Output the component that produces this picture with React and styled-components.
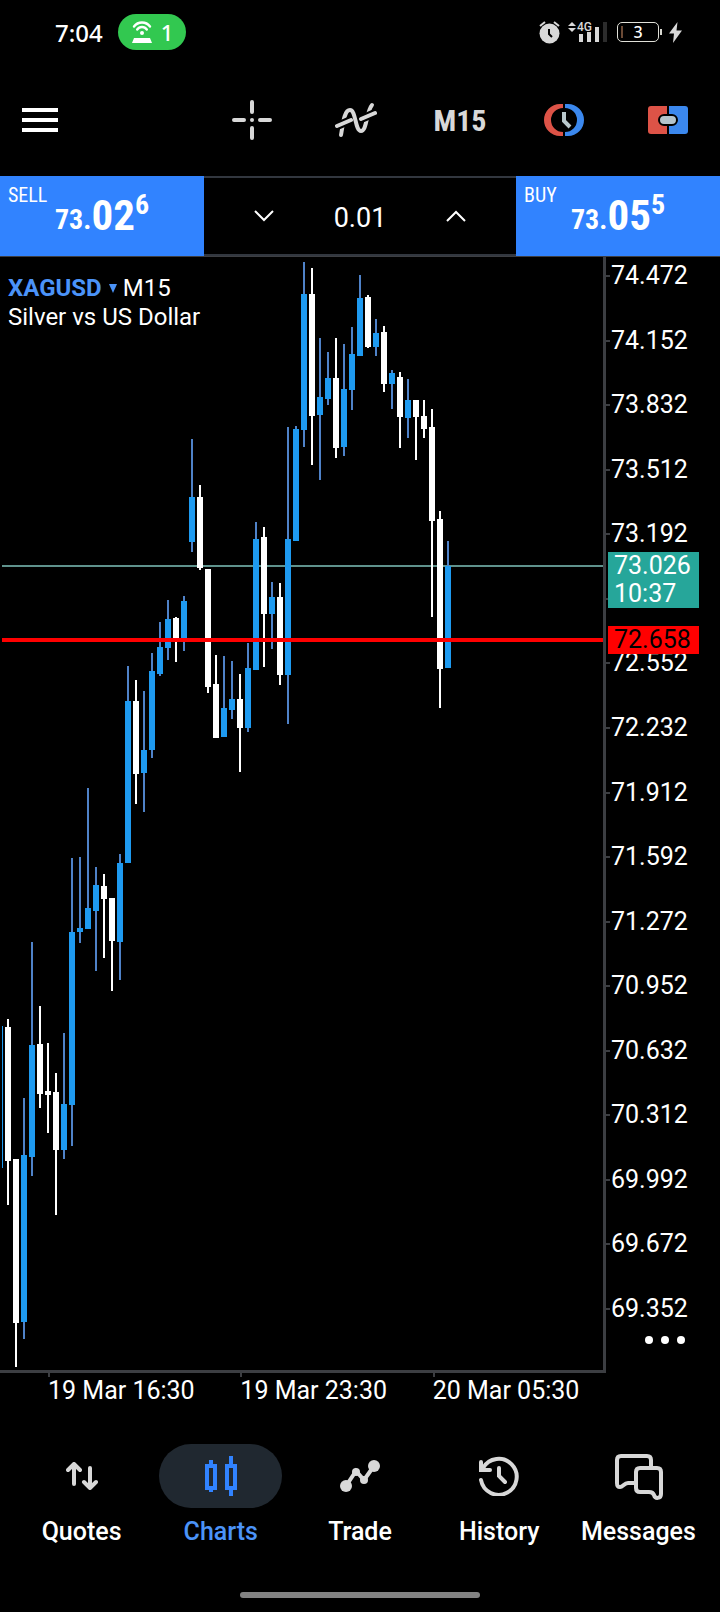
import React, { useState } from 'react';
import styled, { createGlobalStyle } from 'styled-components';

const GlobalStyle = createGlobalStyle`
  * {
    box-sizing: border-box;
  }

  body {
    margin: 0;
    background: #000;
    color: #fff;
    font-family: Roboto, "Noto Sans", sans-serif;
  }

  button, input {
    margin: 0;
    padding: 0;
    border: none;
    background: none;
    color: inherit;
    font-family: inherit;
  }

  button {
    cursor: pointer;
  }

  svg {
    display: block;
  }
`;

const Page = styled.div`
  display: flex;
  flex-direction: column;
  height: 100vh;
  min-height: 900px;
`;

/* ---------- status bar ---------- */

const StatusBar = styled.header`
  display: flex;
  align-items: center;
  height: 64px;
  padding: 0 38px 0 55px;
  font-family: "Noto Sans", sans-serif;
`;

const Clock = styled.time`
  font-size: 24px;
  font-weight: 500;
`;

const Hotspot = styled.div`
  display: flex;
  align-items: center;
  gap: 9px;
  width: 68px;
  height: 36px;
  margin-left: 15px;
  padding-left: 14px;
  border-radius: 18px;
  background: #32c850;
  font-size: 22px;
  font-weight: 500;
`;

const StatusIcons = styled.div`
  display: flex;
  align-items: center;
  gap: 7px;
  margin-left: auto;
`;

const Battery = styled.div`
  display: flex;
  align-items: center;
  gap: 1px;

  &::after {
    content: "";
    width: 2px;
    height: 6px;
    background: #d8d8d0;
  }
`;

const BatteryLevel = styled.span`
  display: flex;
  align-items: center;
  justify-content: center;
  width: 42px;
  height: 20px;
  border: 1px solid #e0e0d8;
  border-radius: 5px;
  background: linear-gradient(#6b4a35, #6b4a35) 3px center / 2px 12px no-repeat;
  font-size: 16px;
  font-weight: 500;
  line-height: 18px;
`;

/* ---------- toolbar ---------- */

const Toolbar = styled.nav`
  display: flex;
  align-items: center;
  height: 112px;
`;

const MenuButton = styled.button`
  padding: 14px 22px;
`;

const Tools = styled.div`
  display: flex;
  flex: 1;
  justify-content: flex-end;
`;

const ToolButton = styled.button`
  display: flex;
  align-items: center;
  justify-content: center;
  width: 104px;
  height: 56px;
  color: #d8d8d8;
  font-family: "Liberation Sans Narrow", "Roboto Condensed", Roboto, sans-serif;
  font-size: 30px;
  font-weight: 700;
`;

/* ---------- one click trading ---------- */

const TradePanel = styled.section`
  display: grid;
  grid-template-columns: 17fr 26fr 17fr;
  height: 80px;
`;

const DealButton = styled.button`
  display: grid;
  grid-template-columns: 1fr;
  justify-items: center;
  align-content: start;
  background: #3183ff;
  color: #fff;
  font-family: "Liberation Sans Narrow", "Roboto Condensed", Roboto, sans-serif;
`;

const DealSide = styled.span`
  grid-area: 1 / 1;
  justify-self: start;
  padding: 8px;
  font-size: 20px;
  line-height: 22px;
`;

const DealPrice = styled.span`
  grid-area: 1 / 1;
  display: flex;
  align-items: flex-start;
  padding-top: 15px;
  font-size: 28px;
  font-weight: 700;
  line-height: 28px;
`;

const Whole = styled.span`
  padding-top: 15px;
`;

const Pips = styled.span`
  font-size: 43px;
  line-height: 48px;
`;

const Volume = styled.div`
  display: flex;
  align-items: center;
  justify-content: space-between;
  border: solid #32373f;
  border-width: 2px 0;
  padding: 0 36px;
`;

const StepButton = styled.button`
  display: flex;
  align-items: center;
  justify-content: center;
  width: 48px;
  height: 48px;
`;

const VolumeInput = styled.input`
  width: 96px;
  padding-top: 3px;
  font-size: 27px;
  text-align: center;
`;

/* ---------- chart ---------- */

const ChartRow = styled.main`
  display: flex;
  flex: 1;
  min-height: 0;
  border-top: 1px solid #3c3e42;
`;

const Plot = styled.div`
  position: relative;
  flex: 1;
  min-width: 0;
  border: solid #3c3e42;
  border-width: 0 3px 3px 0;
`;

const Candles = styled.svg`
  width: 100%;
  height: 100%;
`;

const Legend = styled.div`
  position: absolute;
  top: 17px;
  left: 8px;
  font-size: 24px;
  line-height: 29px;
`;

const SymbolButton = styled.button`
  display: inline-flex;
  align-items: center;
  gap: 7px;
  margin-right: 6px;
  color: #4b93f8;
  font-size: 24px;
  font-weight: 700;
  line-height: 29px;
`;

const PriceAxis = styled.div`
  position: relative;
  display: flex;
  flex-direction: column;
  justify-content: space-between;
  width: 114px;
  padding: 5px 0 50px;
`;

const PriceLabel = styled.span`
  display: flex;
  align-items: center;
  height: 28px;
  font-size: 25px;
  line-height: 28px;

  &::before {
    content: "";
    width: 4px;
    height: 2px;
    margin-right: 1px;
    background: #3c3e42;
  }
`;

const PriceTag = styled.div`
  position: absolute;
  left: 2px;
  width: 91px;
  padding-left: 6px;
  background: ${({ $bg }) => $bg};
  color: ${({ $color }) => $color};
  font-size: 25px;
  line-height: 28px;
`;

const MoreButton = styled.button`
  position: absolute;
  right: 23px;
  bottom: 21px;
  padding: 8px 12px;
`;

const TimeAxis = styled.div`
  display: grid;
  grid-template-columns: repeat(2, minmax(0, 192fr)) minmax(0, 171fr);
  height: 71px;
  margin-right: 117px;
  padding-left: 47px;
`;

const TimeLabel = styled.span`
  padding-left: 1px;
  font-size: 25px;
  line-height: 29px;
  white-space: nowrap;

  &::before {
    content: "";
    display: block;
    width: 2px;
    height: 4px;
    margin-bottom: -1px;
    background: #3c3e42;
  }
`;

/* ---------- bottom navigation ---------- */

const TabBar = styled.nav`
  display: grid;
  grid-template-columns: repeat(5, 1fr);
  padding: 0 12px;
`;

const Tab = styled.a`
  display: flex;
  flex-direction: column;
  align-items: center;
  gap: 10px;
  color: ${({ $active }) => ($active ? '#4b93f8' : '#fff')};
  font-size: 25px;
  font-weight: 500;
  line-height: 28px;
  text-decoration: none;
`;

const TabIcon = styled.span`
  display: flex;
  align-items: center;
  justify-content: center;
  width: 123px;
  height: 64px;
  border-radius: 32px;
  background: ${({ $active }) => ($active ? '#202830' : 'transparent')};
`;

const HomeIndicator = styled.div`
  width: 240px;
  height: 6px;
  margin: 46px auto 14px;
  border-radius: 3px;
  background: #828282;
`;

/* ---------- icons ---------- */

const HotspotIcon = () => (
  <svg width="20" height="22" viewBox="0 0 20 22" fill="none" stroke="#fff" strokeWidth="2.4" strokeLinecap="round">
    <path d="M2 5.5C6 .2 14 .2 18 5.5M5.2 8.5C7.5 5.2 12.500 5.2 14.800 8.5" />
    <circle cx="10" cy="12" r="2" fill="#fff" stroke="none" />
    <path d="M2 17h16l2 5H0z" fill="#fff" stroke="none" />
  </svg>
);

const AlarmIcon = () => (
  <svg width="22" height="23" viewBox="0 0 22 23">
    <circle cx="10.500" cy="12.500" r="10" fill="#d8d8d8" />
    <path d="M1 5l5-4M20 5l-5-4" stroke="#d8d8d8" strokeWidth="2" />
    <path d="M10 8v5l3 3" fill="none" stroke="#000" strokeWidth="2" />
  </svg>
);

const SignalIcon = () => (
  <svg width="42" height="22" viewBox="0 0 42 22" fill="#d8d8d8">
    <path d="M0 5l4-4 4 4zM0 7h8l-4 4z" />
    <text x="9" y="10" fontFamily="Roboto, sans-serif" fontSize="12" fontWeight="500">4G</text>
    <path d="M11 13h4v8h-4zM19 11h4v10h-4zM27 6h4v15h-4z" />
    <path d="M35 1h4v20h-4z" fill="#2c2c2c" />
  </svg>
);

const BoltIcon = () => (
  <svg width="13" height="21" viewBox="0 0 13 21" fill="#d8d8d8">
    <path d="M8.500 0L0 11.500h5L4 21l9-12.500H7.500z" />
  </svg>
);

const MenuIcon = () => (
  <svg width="36" height="24" viewBox="0 0 36 24" fill="#fff">
    <path d="M0 0h36v4H0zM0 10h36v4H0zM0 20h36v4H0z" />
  </svg>
);

const CrosshairIcon = () => (
  <svg width="40" height="40" viewBox="0 0 40 40" fill="none" stroke="#d8d8d8" strokeWidth="4" strokeLinecap="round">
    <path d="M20 2v10M20 28v10M2 20h10M28 20h10" />
    <circle cx="20" cy="20" r="2" fill="#d8d8d8" stroke="none" />
  </svg>
);

const IndicatorsIcon = () => (
  <svg width="42" height="36" viewBox="0 0 42 36" fill="none" strokeLinecap="round">
    <path d="M6 33C8 22 9 8 15 8C21 8 20 29 26 29C32 29 31 10 37 3" stroke="#d8d8d8" strokeWidth="4" />
    <path d="M2 24l14-6M26 17l14-6" stroke="#000" strokeWidth="8" strokeLinecap="butt" />
    <path d="M2 24l14-6M26 17l14-6" stroke="#d8d8d8" strokeWidth="4" />
  </svg>
);

const OrderTimeIcon = () => (
  <svg width="40" height="32" viewBox="0 0 40 32">
    <path d="M19 0h-3a16 16 0 0 0 0 32h3v-4a12 12 0 0 1 0-24z" fill="#dd5347" />
    <path d="M21 0h3a16 16 0 0 1 0 32h-3v-4a12 12 0 0 0 0-24z" fill="#3b88ee" />
    <path d="M20 8v9l6 6" fill="none" stroke="#b9c8cc" strokeWidth="4" />
  </svg>
);

const OneClickIcon = () => (
  <svg width="40" height="28" viewBox="0 0 40 28">
    <path d="M3 0h16v28H3a3 3 0 0 1-3-3V3a3 3 0 0 1 3-3z" fill="#dd5347" />
    <path d="M21 0h16a3 3 0 0 1 3 3v22a3 3 0 0 1-3 3H21z" fill="#3b88ee" />
    <rect x="11" y="9" width="18" height="10" rx="5" fill="#b4c4cc" stroke="#000" strokeWidth="2" />
  </svg>
);

const Chevron = ({ up }) => (
  <svg width="20" height="12" viewBox="0 0 20 12" fill="none" stroke="#fff" strokeWidth="2">
    <path d={up ? 'M1 11l9-9 9 9' : 'M1 1l9 9 9-9'} />
  </svg>
);

const QuotesIcon = () => (
  <svg width="32" height="28" viewBox="0 0 32 28" fill="none" stroke="#d8d8d8" strokeWidth="4" strokeLinecap="round" strokeLinejoin="round">
    <path d="M8 22V2M2 8l6-6 6 6M24 6v20M18 20l6 6 6-6" />
  </svg>
);

const ChartsIcon = () => (
  <svg width="32" height="40" viewBox="0 0 32 40" fill="none" stroke="#3183ff" strokeWidth="4">
    <path d="M2 10h8v22H2zM6 4v6M6 32v4M22 10h8v22h-8zM26 0v10M26 32v8" />
  </svg>
);

const TradeIcon = () => (
  <svg width="40" height="32" viewBox="0 0 40 32" fill="#d8d8d8" stroke="#d8d8d8" strokeWidth="4">
    <path d="M6 26l10-15 8 9L34 6" fill="none" />
    <g stroke="none">
      <circle cx="6" cy="26" r="6" />
      <circle cx="16" cy="12" r="4" />
      <circle cx="24" cy="20" r="4" />
      <circle cx="34" cy="6" r="6" />
    </g>
  </svg>
);

const HistoryIcon = () => (
  <svg width="40" height="40" viewBox="0 0 40 40" fill="none" stroke="#d8d8d8" strokeWidth="4" strokeLinecap="round">
    <path d="M2 24A18 18 0 1 0 4 12M2 6v8h9M20 12v8l6 6" />
  </svg>
);

const MessagesIcon = () => (
  <svg width="50" height="48" viewBox="0 0 50 48" fill="none" stroke="#d8d8d8" strokeWidth="4" strokeLinejoin="round">
    <path d="M22 31H15C11 31 10 35 7 35C4 35 4 33 4 31V8Q4 4 8 4H34Q38 4 38 8V16" />
    <path d="M27 16H44Q48 16 48 20V42C48 47 42 47 41 43Q40 40 36 40H27Q23 40 23 36V20Q23 16 27 16Z" />
  </svg>
);

const DotsIcon = () => (
  <svg width="40" height="8" viewBox="0 0 40 8" fill="#fff">
    <circle cx="4" cy="4" r="4" />
    <circle cx="20" cy="4" r="4" />
    <circle cx="36" cy="4" r="4" />
  </svg>
);

/* ---------- data ---------- */

const UP = 1;
const DOWN = 0;

// [direction, wick top, body top, body bottom, wick bottom]
const candles = [
  [DOWN, 1019, 1027, 1161, 1205],
  [DOWN, 1159, 1159, 1323, 1367],
  [UP, 1098, 1155, 1322, 1339],
  [UP, 942, 1045, 1157, 1176],
  [DOWN, 1006, 1044, 1094, 1108],
  [DOWN, 1043, 1091, 1095, 1133],
  [DOWN, 1073, 1092, 1150, 1215],
  [UP, 1033, 1104, 1150, 1159],
  [UP, 858, 932, 1105, 1146],
  [UP, 857, 928, 932, 943],
  [UP, 788, 908, 929, 929],
  [UP, 867, 885, 911, 971],
  [DOWN, 874, 886, 899, 958],
  [DOWN, 898, 898, 941, 991],
  [UP, 854, 863, 942, 980],
  [UP, 666, 701, 863, 863],
  [DOWN, 680, 701, 774, 804],
  [UP, 691, 750, 773, 812],
  [UP, 653, 671, 750, 758],
  [UP, 622, 647, 674, 676],
  [UP, 600, 619, 648, 660],
  [DOWN, 617, 618, 640, 662],
  [UP, 596, 601, 640, 651],
  [UP, 439, 497, 542, 552],
  [DOWN, 485, 497, 568, 570],
  [DOWN, 569, 569, 687, 693],
  [DOWN, 655, 684, 738, 738],
  [UP, 656, 708, 737, 737],
  [UP, 661, 699, 710, 719],
  [DOWN, 674, 699, 728, 772],
  [UP, 643, 668, 728, 732],
  [UP, 522, 539, 670, 670],
  [DOWN, 527, 537, 614, 667],
  [UP, 582, 597, 614, 649],
  [DOWN, 583, 597, 675, 685],
  [UP, 427, 539, 675, 724],
  [UP, 426, 429, 541, 541],
  [UP, 262, 294, 430, 447],
  [DOWN, 268, 294, 416, 465],
  [UP, 338, 397, 415, 480],
  [UP, 352, 378, 399, 405],
  [DOWN, 338, 378, 448, 458],
  [UP, 344, 389, 447, 456],
  [UP, 327, 354, 390, 410],
  [UP, 275, 298, 356, 356],
  [DOWN, 295, 297, 347, 348],
  [UP, 319, 333, 347, 356],
  [DOWN, 326, 332, 384, 392],
  [UP, 370, 373, 384, 409],
  [DOWN, 372, 377, 417, 448],
  [UP, 379, 400, 418, 438],
  [DOWN, 400, 400, 417, 460],
  [DOWN, 400, 416, 429, 438],
  [DOWN, 409, 427, 521, 617],
  [DOWN, 511, 519, 669, 708],
  [UP, 541, 566, 668, 668],
];

// the blank step is the one covered by the current price tag
const prices = [
  '74.472', '74.152', '73.832', '73.512', '73.192', '', '72.552', '72.232', '71.912',
  '71.592', '71.272', '70.952', '70.632', '70.312', '69.992', '69.672', '69.352',
];

const times = ['19 Mar 16:30', '19 Mar 23:30', '20 Mar 05:30'];

const tools = [
  { label: 'Crosshair', content: <CrosshairIcon /> },
  { label: 'Indicators', content: <IndicatorsIcon /> },
  { label: 'Timeframe M15', content: 'M15' },
  { label: 'New order', content: <OrderTimeIcon /> },
  { label: 'One click trading', content: <OneClickIcon /> },
];

const tabs = [
  { label: 'Quotes', icon: <QuotesIcon /> },
  { label: 'Charts', icon: <ChartsIcon />, active: true },
  { label: 'Trade', icon: <TradeIcon /> },
  { label: 'History', icon: <HistoryIcon /> },
  { label: 'Messages', icon: <MessagesIcon /> },
];

const PLOT_TOP = 257;
const PLOT_HEIGHT = 1113;

const Deal = ({ side, whole, pips, point }) => (
  <DealButton>
    <DealSide>{side}</DealSide>
    <DealPrice>
      <Whole>{whole}</Whole>
      <Pips>{pips}</Pips>
      <span>{point}</span>
    </DealPrice>
  </DealButton>
);

const CandleChart = () => (
  <Candles
    viewBox={`0 ${PLOT_TOP} 603 ${PLOT_HEIGHT}`}
    preserveAspectRatio="none"
    shapeRendering="crispEdges"
    role="img"
    aria-label="XAGUSD M15 candles"
  >
    <rect x="2" y="565" width="601" height="2" fill="#5f928c" />
    <rect x="2" y="1026" width="1" height="142" fill="#1e9af0" />
    {candles.map(([dir, high, top, bottom, low], i) => {
      const x = (i + 1) * 8;
      return (
        <g key={x}>
          <rect x={x - 1} y={high} width="2" height={low - high} fill={dir ? '#4f82c8' : '#fff'} />
          <rect x={x - 3} y={top} width="6" height={bottom - top} fill={dir ? '#1e9af0' : '#fff'} />
        </g>
      );
    })}
    <rect x="2" y="638" width="601" height="4" fill="#f00" />
  </Candles>
);

const App = () => {
  const [volume, setVolume] = useState('0.01');

  const changeVolume = (step) => {
    setVolume(Math.max(0.01, Number(volume) + step).toFixed(2));
  };

  return (
    <Page>
      <GlobalStyle />
      <StatusBar>
        <Clock>7:04</Clock>
        <Hotspot><HotspotIcon />1</Hotspot>
        <StatusIcons>
          <AlarmIcon />
          <SignalIcon />
          <Battery><BatteryLevel>3</BatteryLevel></Battery>
          <BoltIcon />
        </StatusIcons>
      </StatusBar>

      <Toolbar>
        <MenuButton aria-label="Menu"><MenuIcon /></MenuButton>
        <Tools>
          {tools.map(({ label, content }) => (
            <ToolButton key={label} aria-label={label}>{content}</ToolButton>
          ))}
        </Tools>
      </Toolbar>

      <TradePanel>
        <Deal side="SELL" whole="73." pips="02" point="6" />
        <Volume>
          <StepButton aria-label="Decrease volume" onClick={() => changeVolume(-0.01)}><Chevron /></StepButton>
          <VolumeInput aria-label="Volume" value={volume} onChange={(e) => setVolume(e.target.value)} />
          <StepButton aria-label="Increase volume" onClick={() => changeVolume(0.01)}><Chevron up /></StepButton>
        </Volume>
        <Deal side="BUY" whole="73." pips="05" point="5" />
      </TradePanel>

      <ChartRow>
        <Plot>
          <CandleChart />
          <Legend>
            <SymbolButton>
              XAGUSD
              <svg width="8" height="9" viewBox="0 0 8 9" fill="#4b93f8"><path d="M0 0h8L4 9z" /></svg>
            </SymbolButton>
            M15
            <div>Silver vs US Dollar</div>
          </Legend>
        </Plot>
        <PriceAxis>
          {prices.map((price, i) => <PriceLabel key={i}>{price}</PriceLabel>)}
          <PriceTag $bg="#26a69a" $color="#fff" style={{ top: `${(295 / 1116) * 100}%` }}>
            73.026<br />10:37
          </PriceTag>
          <PriceTag $bg="#f00" $color="#000" style={{ top: `${(369 / 1116) * 100}%` }}>
            72.658
          </PriceTag>
          <MoreButton aria-label="More"><DotsIcon /></MoreButton>
        </PriceAxis>
      </ChartRow>
      <TimeAxis>
        {times.map((time) => <TimeLabel key={time}>{time}</TimeLabel>)}
      </TimeAxis>

      <TabBar>
        {tabs.map(({ label, icon, active }) => (
          <Tab key={label} href={`#${label.toLowerCase()}`} $active={active}>
            <TabIcon $active={active}>{icon}</TabIcon>
            {label}
          </Tab>
        ))}
      </TabBar>
      <HomeIndicator />
    </Page>
  );
};

export default App;
